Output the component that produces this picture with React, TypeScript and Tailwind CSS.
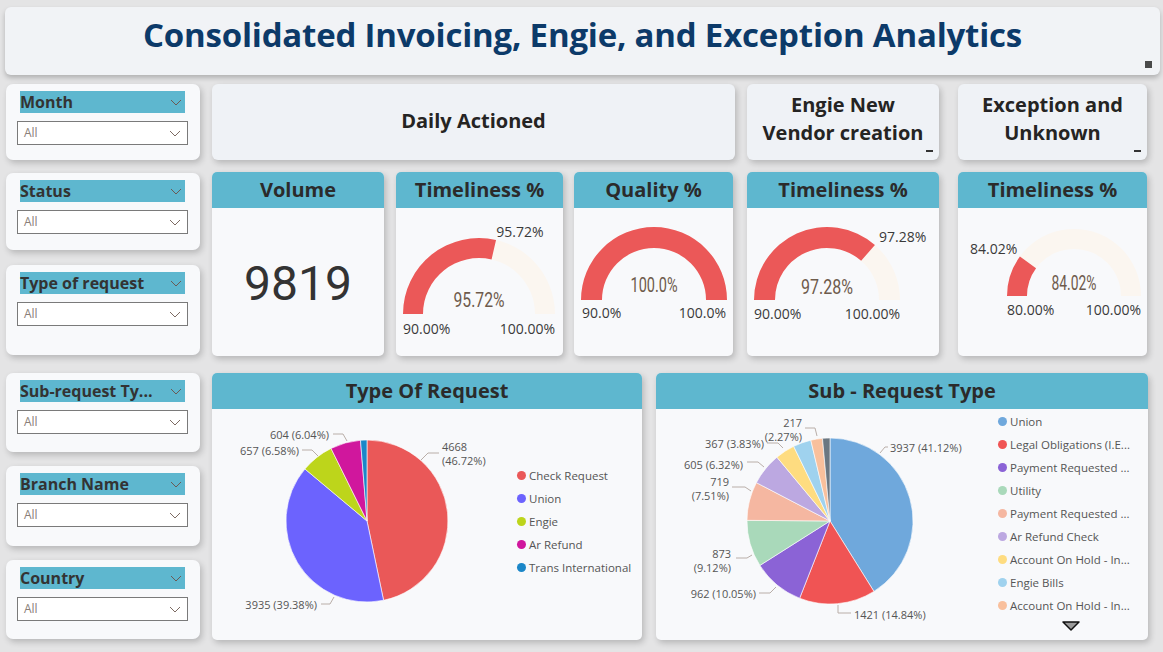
import React from "react";

const FONT = "font-['Open_Sans','Noto_Sans',sans-serif]";

const arcPath = (cx: number, cy: number, R: number, r: number, f0: number, f1: number) => {
  const pt = (rad: number, f: number) => {
    const a = Math.PI * (1 - f);
    return [cx + rad * Math.cos(a), cy - rad * Math.sin(a)];
  };
  const [x0, y0] = pt(R, f0);
  const [x1, y1] = pt(R, f1);
  const [x2, y2] = pt(r, f1);
  const [x3, y3] = pt(r, f0);
  return `M${x0} ${y0} A${R} ${R} 0 0 1 ${x1} ${y1} L${x2} ${y2} A${r} ${r} 0 0 0 ${x3} ${y3} Z`;
};

const slicePath = (cx: number, cy: number, r: number, f0: number, f1: number) => {
  const p = (f: number) => [cx + r * Math.sin(2 * Math.PI * f), cy - r * Math.cos(2 * Math.PI * f)];
  const [x0, y0] = p(f0);
  const [x1, y1] = p(f1);
  const large = f1 - f0 > 0.5 ? 1 : 0;
  return `M${cx} ${cy} L${x0} ${y0} A${r} ${r} 0 ${large} 1 ${x1} ${y1} Z`;
};

const Chevron = ({ color = "#7d6b63" }: { color?: string }) => (
  <svg width="12" height="7" viewBox="0 0 12 7">
    <polyline points="1,1 6,6 11,1" fill="none" stroke={color} strokeWidth="1" />
  </svg>
);

const FilterCard = ({ label, cls }: { label: string; cls: string }) => (
  <div className={`${cls} w-[194px] rounded-[7px] bg-[#f8f9fb] shadow-[2px_3px_6px_rgba(0,0,0,0.2)] pt-[7px]`}>
    <div className="ml-[14px] w-[165px] h-[22px] bg-[#5eb7cf] flex items-center justify-between pr-[3px]">
      <span className="text-[16px] font-bold text-[#333] leading-none">{label}</span>
      <Chevron color="#6b5a55" />
    </div>
    <div className="ml-[11px] mt-[8px] w-[171px] h-[24px] border border-[#7a7a7a] bg-white flex items-center justify-between px-[6px]">
      <span className="text-[12px] text-[#8a7e78]">All</span>
      <Chevron />
    </div>
  </div>
);

type GaugeProps = {
  w: number;
  cx: number;
  cy: number;
  R: number;
  r: number;
  frac: number;
  center: string;
  centerY: number;
  centerW: number;
  top?: { text: string; x: number; y: number; anchor: "start" | "middle" | "end" };
  min: string;
  max: string;
  minX: number;
  maxX: number;
  labY: number;
};

const Gauge = (g: GaugeProps) => (
  <svg width={g.w} height={148} className="block">
    <path d={arcPath(g.cx, g.cy, g.R, g.r, 0, 1)} fill="#fbf6f0" />
    <path d={arcPath(g.cx, g.cy, g.R, g.r, 0, g.frac)} fill="#eb5858" />
    <text
      x={g.cx}
      y={g.centerY}
      textAnchor="middle"
      dominantBaseline="central"
      fontSize="20"
      fill="#6e5b4c"
      textLength={g.centerW}
      lengthAdjust="spacingAndGlyphs"
      fontFamily="Roboto, sans-serif"
    >
      {g.center}
    </text>
    {g.top && (
      <text x={g.top.x} y={g.top.y} textAnchor={g.top.anchor} dominantBaseline="central" fontSize="14" fill="#3a3a3a" fontFamily="'Open Sans', sans-serif">
        {g.top.text}
      </text>
    )}
    <text x={g.minX} y={g.labY} textAnchor="start" dominantBaseline="central" fontSize="14" fill="#3a3a3a" fontFamily="'Open Sans', sans-serif">
      {g.min}
    </text>
    <text x={g.maxX} y={g.labY} textAnchor="end" dominantBaseline="central" fontSize="14" fill="#3a3a3a" fontFamily="'Open Sans', sans-serif">
      {g.max}
    </text>
  </svg>
);

const KpiCard = ({ title, cls, children }: { title: string; cls: string; children: React.ReactNode }) => (
  <div className={`${cls} h-[184px] rounded-[5px] bg-[#f8f9fb] shadow-[2px_3px_6px_rgba(0,0,0,0.2)] overflow-hidden`}>
    <div className="h-[36px] bg-[#5eb7cf] flex items-center justify-center">
      <span className="text-[20px] font-bold text-[#2b2b2b]">{title}</span>
    </div>
    {children}
  </div>
);

type Label = { lines: string[]; x: number; y: number; anchor: "start" | "end"; leader: string };

const PieChart = ({
  w,
  cx,
  cy,
  r,
  slices,
  labels,
}: {
  w: number;
  cx: number;
  cy: number;
  r: number;
  slices: { v: number; c: string }[];
  labels: Label[];
}) => {
  let acc = 0;
  return (
    <svg width={w} height={231} className="block">
      {slices.map((s, i) => {
        const f0 = acc;
        acc += s.v / 100;
        return <path key={i} d={slicePath(cx, cy, r, f0, Math.min(acc, 0.99999))} fill={s.c} stroke="#ffffff" strokeWidth="0.6" />;
      })}
      {labels.map((l, i) => (
        <g key={i}>
          <polyline points={l.leader} fill="none" stroke="#b9aea8" strokeWidth="1" />
          {l.lines.map((t, j) => (
            <text key={j} x={l.x} y={l.y + j * 14} textAnchor={l.anchor} dominantBaseline="central" fontSize="11" fill="#555" fontFamily="'Open Sans', sans-serif">
              {t}
            </text>
          ))}
        </g>
      ))}
    </svg>
  );
};

const LegendItem = ({ c, t }: { c: string; t: string }) => (
  <div className="flex items-center h-[23px]">
    <span className="w-[9px] h-[9px] rounded-full mr-[3px]" style={{ background: c }} />
    <span className="text-[11.5px] text-[#555] whitespace-nowrap">{t}</span>
  </div>
);

export default function App() {
  const typeSlices = [
    { v: 46.72, c: "#ea5858" },
    { v: 39.38, c: "#6c63fe" },
    { v: 6.58, c: "#bdd51b" },
    { v: 6.04, c: "#d0179d" },
    { v: 1.28, c: "#1b87c8" },
  ];
  const subSlices = [
    { v: 41.12, c: "#6fa8dc" },
    { v: 14.84, c: "#f05454" },
    { v: 10.05, c: "#8b63d6" },
    { v: 9.12, c: "#a9d9ba" },
    { v: 7.51, c: "#f5b7a1" },
    { v: 6.32, c: "#bca8e1" },
    { v: 3.83, c: "#fedc80" },
    { v: 3.5, c: "#9fd2ee" },
    { v: 2.27, c: "#f9c09c" },
    { v: 1.44, c: "#6b7781" },
  ];
  const typeLegend = [
    ["#ea5858", "Check Request"],
    ["#6c63fe", "Union"],
    ["#bdd51b", "Engie"],
    ["#d0179d", "Ar Refund"],
    ["#1b87c8", "Trans International"],
  ];
  const subLegend = [
    ["#6fa8dc", "Union"],
    ["#f05454", "Legal Obligations (I.E..."],
    ["#8b63d6", "Payment Requested ..."],
    ["#a9d9ba", "Utility"],
    ["#f5b7a1", "Payment Requested ..."],
    ["#bca8e1", "Ar Refund Check"],
    ["#fedc80", "Account On Hold - In..."],
    ["#9fd2ee", "Engie Bills"],
    ["#f9c09c", "Account On Hold - In..."],
  ];

  return (
    <div className={`w-[1163px] h-[652px] overflow-hidden bg-[#e4e4e5] ${FONT}`}>
      {/* title */}
      <div className="pt-[7px] pl-[5px]">
        <div className="relative w-[1155px] h-[68px] rounded-[6px] bg-[#f1f3f6] shadow-[0px_3px_5px_rgba(0,0,0,0.22)] flex items-center justify-center">
          <h1 className="text-[33px] font-bold text-[#0c3a69] tracking-[-0.2px] -mt-[12px]">
            Consolidated Invoicing, Engie, and Exception Analytics
          </h1>
          <span className="absolute right-[8px] bottom-[7px] w-[7px] h-[7px] bg-[#4a4a4a]" />
        </div>
      </div>

      <div className="flex pl-[6px] mt-[9px]">
        {/* filters */}
        <div className="flex flex-col w-[194px]">
          <FilterCard label="Month" cls="h-[76px]" />
          <FilterCard label="Status" cls="mt-[13px] h-[77px]" />
          <FilterCard label="Type of request" cls="mt-[15px] h-[90px]" />
          <FilterCard label="Sub-request Ty..." cls="mt-[18px] h-[79px]" />
          <FilterCard label="Branch Name" cls="mt-[14px] h-[80px]" />
          <FilterCard label="Country" cls="mt-[14px] h-[79px]" />
        </div>

        {/* main */}
        <div className="ml-[12px] w-[936px] flex flex-col">
          <div className="flex h-[76px] text-[#252423] font-bold text-[20px] leading-[28px] text-center">
            <div className="w-[523px] rounded-[6px] bg-[#eff2f6] shadow-[2px_3px_6px_rgba(0,0,0,0.2)] flex items-center justify-center">
              <span className="-mt-[2px]">Daily Actioned</span>
            </div>
            <div className="relative ml-[12px] w-[192px] rounded-[6px] bg-[#eff2f6] shadow-[2px_3px_6px_rgba(0,0,0,0.2)] flex items-center justify-center">
              <span className="-mt-[6px]">
                Engie New
                <br />
                Vendor creation
              </span>
              <span className="absolute right-[6px] bottom-[8px] w-[7px] h-[2px] bg-[#333]" />
            </div>
            <div className="relative ml-[19px] w-[189px] rounded-[6px] bg-[#eff2f6] shadow-[2px_3px_6px_rgba(0,0,0,0.2)] flex items-center justify-center">
              <span className="-mt-[6px]">
                Exception and
                <br />
                Unknown
              </span>
              <span className="absolute right-[6px] bottom-[8px] w-[7px] h-[2px] bg-[#333]" />
            </div>
          </div>

          <div className="flex mt-[12px]">
            <KpiCard title="Volume" cls="w-[172px]">
              <div className="h-[148px] flex items-center justify-center pt-[4px]">
                <span className="text-[48px] text-[#333] font-['Roboto',sans-serif] font-normal">9819</span>
              </div>
            </KpiCard>
            <KpiCard title="Timeliness %" cls="ml-[12px] w-[167px]">
              <Gauge
                w={167}
                cx={83}
                cy={106}
                R={76}
                r={56}
                frac={0.572}
                center="95.72%"
                centerY={92}
                centerW={51}
                top={{ text: "95.72%", x: 124, y: 23, anchor: "middle" }}
                min="90.00%"
                max="100.00%"
                minX={7}
                maxX={159}
                labY={120}
              />
            </KpiCard>
            <KpiCard title="Quality %" cls="ml-[11px] w-[159px]">
              <Gauge
                w={159}
                cx={80}
                cy={92}
                R={73}
                r={52}
                frac={1}
                center="100.0%"
                centerY={77}
                centerW={47}
                min="90.0%"
                max="100.0%"
                minX={8}
                maxX={152}
                labY={104}
              />
            </KpiCard>
            <KpiCard title="Timeliness %" cls="ml-[14px] w-[192px]">
              <Gauge
                w={192}
                cx={80}
                cy={92}
                R={73}
                r={52}
                frac={0.728}
                center="97.28%"
                centerY={79}
                centerW={52}
                top={{ text: "97.28%", x: 132, y: 28, anchor: "start" }}
                min="90.00%"
                max="100.00%"
                minX={7}
                maxX={153}
                labY={105}
              />
            </KpiCard>
            <KpiCard title="Timeliness %" cls="ml-[19px] w-[189px]">
              <Gauge
                w={189}
                cx={116}
                cy={88}
                R={67}
                r={47}
                frac={0.201}
                center="84.02%"
                centerY={75}
                centerW={45}
                top={{ text: "84.02%", x: 12, y: 40, anchor: "start" }}
                min="80.00%"
                max="100.00%"
                minX={49}
                maxX={183}
                labY={101}
              />
            </KpiCard>
          </div>

          <div className="flex mt-[17px]">
            <div className="w-[430px] h-[267px] rounded-[5px] bg-[#f8f9fb] shadow-[2px_3px_6px_rgba(0,0,0,0.2)] overflow-hidden">
              <div className="h-[36px] bg-[#5eb7cf] flex items-center justify-center">
                <span className="text-[20px] font-bold text-[#2b2b2b]">Type Of Request</span>
              </div>
              <div className="flex">
                <PieChart
                  w={300}
                  cx={155}
                  cy={112}
                  r={81}
                  slices={typeSlices}
                  labels={[
                    { lines: ["4668", "(46.72%)"], x: 230, y: 37, anchor: "start", leader: "209,51 216,44 227,44" },
                    { lines: ["3935 (39.38%)"], x: 105, y: 195, anchor: "end", leader: "109,195 118,195 122,188" },
                    { lines: ["657 (6.58%)"], x: 87, y: 41, anchor: "end", leader: "90,41 100,41 106,47" },
                    { lines: ["604 (6.04%)"], x: 117, y: 25, anchor: "end", leader: "121,25 131,25 135,32" },
                  ]}
                />
                <div className="ml-[5px] pt-[55px] flex flex-col">
                  {typeLegend.map(([c, t]) => (
                    <LegendItem key={t} c={c} t={t} />
                  ))}
                </div>
              </div>
            </div>

            <div className="relative ml-[14px] w-[492px] h-[267px] rounded-[5px] bg-[#f8f9fb] shadow-[2px_3px_6px_rgba(0,0,0,0.2)] overflow-hidden">
              <div className="h-[36px] bg-[#5eb7cf] flex items-center justify-center">
                <span className="text-[20px] font-bold text-[#2b2b2b]">Sub - Request Type</span>
              </div>
              <div className="flex">
                <PieChart
                  w={340}
                  cx={174}
                  cy={112}
                  r={83}
                  slices={subSlices}
                  labels={[
                    { lines: ["3937 (41.12%)"], x: 234, y: 38, anchor: "start", leader: "224,44 229,38 232,38" },
                    { lines: ["1421 (14.84%)"], x: 198, y: 205, anchor: "start", leader: "182,196 182,204 195,204" },
                    { lines: ["962 (10.05%)"], x: 100, y: 184, anchor: "end", leader: "103,184 114,184 120,178" },
                    { lines: ["873", "(9.12%)"], x: 75, y: 144, anchor: "end", leader: "80,149 91,149 96,146" },
                    { lines: ["719", "(7.51%)"], x: 73, y: 72, anchor: "end", leader: "76,78 89,78 95,82" },
                    { lines: ["605 (6.32%)"], x: 87, y: 55, anchor: "end", leader: "91,53 102,53 108,58" },
                    { lines: ["367 (3.83%)"], x: 108, y: 34, anchor: "end", leader: "111,34 122,34 127,39" },
                    { lines: ["217", "(2.27%)"], x: 146, y: 13, anchor: "end", leader: "149,19 159,19 161,27" },
                  ]}
                />
                <div className="ml-[2px] pt-[1px] flex flex-col">
                  {subLegend.map(([c, t], i) => (
                    <LegendItem key={i} c={c} t={t} />
                  ))}
                </div>
              </div>
              <svg className="absolute left-[406px] top-[248px]" width="18" height="10" viewBox="0 0 18 10">
                <polygon points="1,1 17,1 9,9" fill="#9a9a9a" stroke="#111" strokeWidth="1.5" strokeLinejoin="round" />
              </svg>
            </div>
          </div>
        </div>
      </div>
    </div>
  );
}
